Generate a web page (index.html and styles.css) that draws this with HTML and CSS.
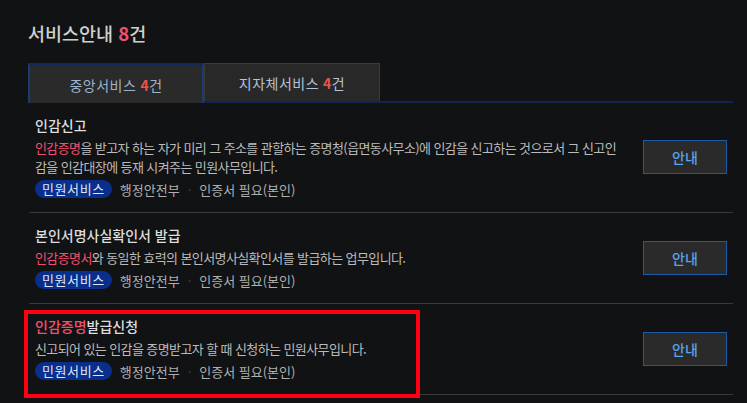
FILE: index.html
```html
<!DOCTYPE html>
<html lang="ko">
<head>
    <meta charset="UTF-8">
    <title>서비스안내</title>
    <link rel="stylesheet" href="styles.css">
</head>
<body>
<div class="wrap">
    <h2 class="heading">서비스안내 <em>8</em>건</h2>
    <div class="tabs">
        <div class="tab active">중앙서비스 <em>4</em>건</div>
        <div class="tab">지자체서비스 <em>4</em>건</div>
    </div>
    <ul class="list">
        <li class="item">
            <div class="info">
                <p class="name">인감신고</p>
                <p class="desc"><span class="hl">인감증명</span>을 받고자 하는 자가 미리 그 주소를 관할하는 증명청(읍면동사무소)에 인감을 신고하는 것으로서 그 신고인감을 인감대장에 등재 시켜주는 민원사무입니다.</p>
                <div class="tags">
                    <span class="badge">민원서비스</span>
                    <span class="meta">행정안전부</span>
                    <span class="dot">·</span>
                    <span class="meta">인증서 필요(본인)</span>
                </div>
            </div>
            <button class="btn">안내</button>
        </li>
        <li class="item">
            <div class="info">
                <p class="name">본인서명사실확인서 발급</p>
                <p class="desc"><span class="hl">인감증명서</span>와 동일한 효력의 본인서명사실확인서를 발급하는 업무입니다.</p>
                <div class="tags">
                    <span class="badge">민원서비스</span>
                    <span class="meta">행정안전부</span>
                    <span class="dot">·</span>
                    <span class="meta">인증서 필요(본인)</span>
                </div>
            </div>
            <button class="btn">안내</button>
        </li>
        <li class="item marked">
            <div class="info">
                <p class="name"><span class="hl">인감증명</span>발급신청</p>
                <p class="desc">신고되어 있는 인감을 증명받고자 할 때 신청하는 민원사무입니다.</p>
                <div class="tags">
                    <span class="badge">민원서비스</span>
                    <span class="meta">행정안전부</span>
                    <span class="dot">·</span>
                    <span class="meta">인증서 필요(본인)</span>
                </div>
            </div>
            <button class="btn">안내</button>
            <div class="mark"></div>
        </li>
    </ul>
</div>
</body>
</html>
```

FILE: styles.css
```css
body,html{
    margin: 0;
    padding: 0;
    width: 100%;
    height: 100%;
    overflow: hidden;
    background-color: #111214;
}
.wrap{
    padding: 21px 0 0 28px;
    width: 705px;
    font-family: "Noto Sans CJK KR", "Noto Sans", sans-serif;
    color: #bdbdbd;
}
.heading{
    margin: 0;
    font-size: 18.5px;
    font-weight: 500;
    line-height: 24px;
    color: #cfcfcf;
}
.heading em{
    font-style: normal;
    color: #f0506e;
    font-weight: 700;
}
.tabs{
    display: flex;
    margin-top: 18px;
    height: 38px;
    border-bottom: 2px solid #0f2652;
}
.tab{
    box-sizing: border-box;
    width: 176px;
    height: 38px;
    display: flex;
    align-items: center;
    justify-content: center;
    font-size: 14px;
    letter-spacing: 0.5px;
    color: #b4c3d6;
    background-color: #282828;
    border: 1px solid #3a3a3a;
    border-bottom: none;
}
.tab.active{
    height: 40px;
    margin-bottom: -2px;
    background-color: #2a2a2a;
    border: 2px solid #1b3a70;
    border-top: 3px solid #12295e;
    border-bottom: none;
    color: #9fb3cc;
}
.tab em{
    font-style: normal;
    font-weight: 700;
    color: #e8534a;
    margin-left: 4px;
}
.list{
    list-style: none;
    margin: 0 0 0 1px;
    padding: 0;
}
.item{
    position: relative;
    display: flex;
    align-items: center;
    padding: 12px 6px 13px 6px;
    border-bottom: 1px solid #3a3a3a;
}
.info{
    flex: 1;
    padding-right: 21px;
}
.name{
    margin: 0;
    font-size: 14px;
    font-weight: 500;
    line-height: 20px;
    color: #dedede;
}
.desc{
    margin: 3px 0 0;
    font-size: 13px;
    line-height: 19px;
    letter-spacing: -0.6px;
    color: #bbbbbb;
}
.hl{
    color: #f0506e;
}
.tags{
    display: flex;
    align-items: center;
    margin-top: 3px;
    height: 20px;
    font-size: 13px;
}
.badge{
    height: 18px;
    line-height: 18px;
    padding: 0 7px;
    border-radius: 9px;
    background-color: #0a2e8c;
    color: #dfe6f7;
    letter-spacing: 0.6px;
}
.meta{
    margin-left: 8px;
    color: #b0b0b0;
}
.dot{
    margin-left: 8px;
    color: #444;
}
.btn{
    width: 84px;
    height: 34px;
    background-color: #2a2a2a;
    border: 1px solid #1c59a6;
    color: #5aa2ea;
    font-family: "Noto Sans CJK KR", "Noto Sans", sans-serif;
    font-size: 14px;
    font-weight: 500;
    cursor: pointer;
}
.mark{
    position: absolute;
    left: -5px;
    top: 6px;
    width: 396px;
    height: 88px;
    box-sizing: border-box;
    border: 4px solid #ff0010;
}
```
